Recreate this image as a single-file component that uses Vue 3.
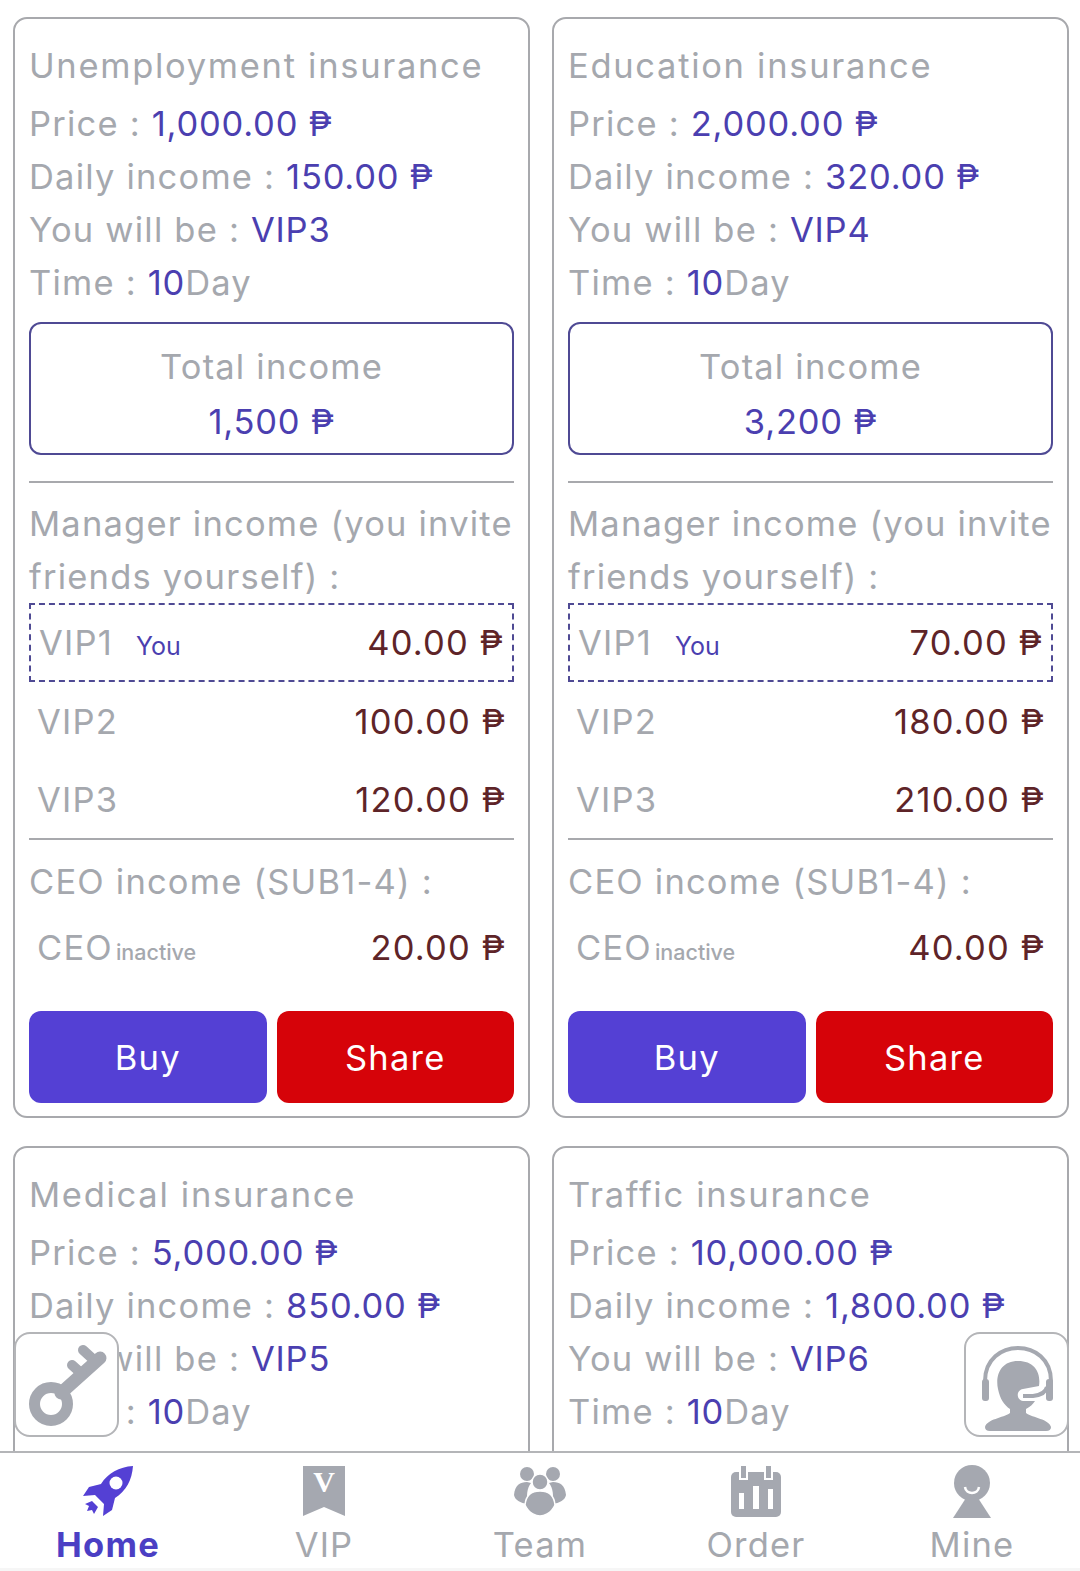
<script setup>
// only the first two plans are fully visible, the others sit behind the tab bar
const plans = [
  { name: "Unemployment insurance", price: "1,000.00", daily: "150.00", vip: "VIP3", total: "1,500", v1: "40.00", v2: "100.00", v3: "120.00", ceo: "20.00" },
  { name: "Education insurance", price: "2,000.00", daily: "320.00", vip: "VIP4", total: "3,200", v1: "70.00", v2: "180.00", v3: "210.00", ceo: "40.00" },
  { name: "Medical insurance", price: "5,000.00", daily: "850.00", vip: "VIP5" },
  { name: "Traffic insurance", price: "10,000.00", daily: "1,800.00", vip: "VIP6" },
];

const tabs = ["Home", "VIP", "Team", "Order", "Mine"];
</script>

<template>
  <div class="page">
    <main class="scroll">
      <div class="grid">
        <section v-for="plan in plans" :key="plan.name" class="card">
          <div class="line title">{{ plan.name }}</div>
          <div class="line">Price : <span class="blue">{{ plan.price }} ₱</span></div>
          <div class="line">Daily income : <span class="blue">{{ plan.daily }} ₱</span></div>
          <div class="line">You will be : <span class="blue">{{ plan.vip }}</span></div>
          <div class="line">Time : <span class="blue">10</span>Day</div>

          <template v-if="plan.total">
            <div class="total">
              <div>Total income</div>
              <div class="blue">{{ plan.total }} ₱</div>
            </div>

            <hr class="divider first" />
            <div class="line heading">Manager income (you invite<br />friends yourself) :</div>

            <div class="row mine-row">
              <span>VIP1<small class="you">You</small></span>
              <span class="money">{{ plan.v1 }} ₱</span>
            </div>
            <div class="row">
              <span>VIP2</span>
              <span class="money">{{ plan.v2 }} ₱</span>
            </div>
            <div class="row">
              <span>VIP3</span>
              <span class="money">{{ plan.v3 }} ₱</span>
            </div>

            <hr class="divider" />
            <div class="line heading ceo">CEO income (SUB1-4) :</div>
            <div class="row">
              <span>CEO<small class="inactive">inactive</small></span>
              <span class="money">{{ plan.ceo }} ₱</span>
            </div>

            <div class="actions">
              <button type="button" class="btn buy">Buy</button>
              <button type="button" class="btn share">Share</button>
            </div>
          </template>
        </section>
      </div>
    </main>

    <button type="button" class="float left" aria-label="Key">
      <svg viewBox="0 0 104 104" width="104" height="104">
        <circle cx="36" cy="71" r="16.5" fill="none" stroke="#a5a8b0" stroke-width="11" />
        <path d="M46 60 L85 25" stroke="#a5a8b0" stroke-width="13" stroke-linecap="round" fill="none" />
        <path d="M80 28 L68 17 M67 41 L57 32" stroke="#a5a8b0" stroke-width="10" stroke-linecap="round" fill="none" />
      </svg>
    </button>
    <button type="button" class="float right" aria-label="Support">
      <svg viewBox="0 0 104 104" width="104" height="104">
        <path d="M20 62 V48 C20 4 86 4 86 48 V62" fill="none" stroke="#a5a8b0" stroke-width="4" />
        <rect x="17" y="46" width="7" height="22" rx="3" fill="#a5a8b0" />
        <rect x="81" y="46" width="7" height="22" rx="3" fill="#a5a8b0" />
        <path d="M53 28 C36 28 30 42 33 56 C35 66 39 72 45 76 V80 C38 85 22 86 20 94 Q20 98 25 98 H81 Q86 98 86 94 C84 86 68 85 61 80 V76 C65 74 68 71 70 68 H58 C51 67 51 57 58 56 L74 53 C76 40 70 28 53 28 Z" fill="#a5a8b0" />
        <path d="M58 63 H68 C76 62 81 59 82 54" fill="none" stroke="#a5a8b0" stroke-width="4" />
      </svg>
    </button>

    <nav class="tabbar">
      <div v-for="(tab, i) in tabs" :key="tab" class="tab" :class="{ active: i === 0 }">
        <svg v-if="i === 0" viewBox="0 0 54 54" width="54" height="54">
          <path d="M52 2 C38 3 27 9 20 20 L8 23 L2 32 L14 31 L23 40 L22 52 L31 46 L34 34 C45 27 51 16 52 2 Z" fill="#5440d4" />
          <circle cx="35" cy="19" r="6.5" fill="#fff" />
          <path d="M11 37 L17 43 L13 50 L11 46 L6 47 L8 42 L4 40 Z" fill="#5440d4" />
        </svg>
        <svg v-else-if="i === 1" viewBox="0 0 54 54" width="54" height="54">
          <path d="M6 2 H48 V52 L27 43 L6 52 Z" fill="#a5a8b0" />
          <text x="27" y="28" text-anchor="middle" class="v-mark">V</text>
        </svg>
        <svg v-else-if="i === 2" viewBox="0 0 54 54" width="54" height="54">
          <circle cx="14" cy="10" r="7" fill="#a5a8b0" />
          <circle cx="40" cy="10" r="7" fill="#a5a8b0" />
          <path d="M1 31 C2 21 7 18 14 18 L18 19 C14 24 13 32 15 40 C7 39 2 36 1 31 Z" fill="#a5a8b0" />
          <path d="M53 31 C52 21 47 18 40 18 L36 19 C40 24 41 32 39 40 C47 39 52 36 53 31 Z" fill="#a5a8b0" />
          <circle cx="27" cy="18" r="8" fill="#a5a8b0" stroke="#fff" stroke-width="1.5" />
          <path d="M12 41 C13 30 20 27 27 27 C34 27 41 30 42 41 C38 50 30 52 27 52 C24 52 16 50 12 41 Z" fill="#a5a8b0" stroke="#fff" stroke-width="1.5" />
        </svg>
        <svg v-else-if="i === 3" viewBox="0 0 54 54" width="54" height="54">
          <rect x="2" y="8" width="50" height="45" rx="5" fill="#a5a8b0" />
          <rect x="11" y="1" width="7" height="14" fill="#a5a8b0" stroke="#fff" stroke-width="2" />
          <rect x="36" y="1" width="7" height="14" fill="#a5a8b0" stroke="#fff" stroke-width="2" />
          <path d="M10 29 h5 v16 h-5 z M24 22 h6 v23 h-6 z M39 25 h5 v20 h-5 z" fill="#fff" />
        </svg>
        <svg v-else viewBox="0 0 54 54" width="54" height="54">
          <circle cx="27" cy="19" r="18" fill="#a5a8b0" />
          <path d="M21 34 H33 L46 54 H8 Z" fill="#a5a8b0" />
          <path d="M20 23 C21 31 33 31 34 23" fill="none" stroke="#fff" stroke-width="2.5" />
        </svg>
        <span class="tab-label">{{ tab }}</span>
      </div>
    </nav>
  </div>
</template>

<style>
html,
body {
  margin: 0;
  background: #fff;
}
</style>

<style scoped>
.page {
  position: relative;
  display: flex;
  flex-direction: column;
  width: 1080px;
  height: 1571px;
  overflow: hidden;
  background: #fff;
  color: #a5a8ae;
  font-family: "Inter", "DejaVu Sans", sans-serif;
  font-size: 34.5px;
  letter-spacing: 1.2px;
}

.scroll {
  flex: 1;
  min-height: 0;
  overflow: hidden;
  padding: 17px 11px 0 13px;
}

.grid {
  display: grid;
  grid-template-columns: 517px 517px;
  gap: 28px 22px;
}

.card {
  box-sizing: border-box;
  height: 1101px;
  padding: 20px 14px 12px;
  border: 2px solid #a8a9ad;
  border-radius: 14px;
}

.line {
  line-height: 53px;
  white-space: nowrap;
}

.title {
  margin-bottom: 5px;
  letter-spacing: 1.7px;
}

.heading {
  margin-top: 14px;
}

.heading.ceo {
  margin-top: 15px;
}

.blue {
  color: #4b3fb0;
  letter-spacing: 0.8px;
}

.total {
  box-sizing: border-box;
  height: 133px;
  margin-top: 13px;
  padding: 15px 0;
  border: 2px solid #4f4a94;
  border-radius: 12px;
  line-height: 55px;
  text-align: center;
}

.divider {
  height: 2px;
  margin: 0;
  border: 0;
  background: #a8a9ad;
}

.divider.first {
  margin-top: 26px;
}

.row {
  box-sizing: border-box;
  display: flex;
  align-items: center;
  justify-content: space-between;
  height: 78px;
  padding: 0 8px;
}

.mine-row {
  height: 79px;
  border: 2px dashed #4f4a94;
}

.money {
  color: #5e2428;
}

.you {
  margin-left: 23px;
  color: #4b3fb0;
  font-size: 25px;
  letter-spacing: 0;
}

.inactive {
  margin-left: 3px;
  font-size: 21.5px;
  font-weight: 500;
  letter-spacing: 0;
}

.actions {
  display: flex;
  gap: 10px;
  margin-top: 25px;
}

.btn {
  flex: 1;
  height: 92px;
  border: 0;
  border-radius: 12px;
  color: #fff;
  font: inherit;
  letter-spacing: inherit;
}

.buy {
  background: #5440d4;
}

.share {
  background: #d60309;
}

.float {
  position: absolute;
  top: 1332px;
  box-sizing: border-box;
  width: 105px;
  height: 105px;
  padding: 0;
  border: 2px solid #b4b5b8;
  border-radius: 16px;
  background: #fff;
}

.float svg {
  display: block;
  margin: -1px;
}

.left {
  left: 14px;
}

.right {
  left: 964px;
}

.tabbar {
  box-sizing: border-box;
  display: grid;
  grid-template-columns: repeat(5, 216px);
  flex: none;
  height: 120px;
  padding-top: 11px;
  border-top: 2px solid #b4b5b8;
  border-bottom: 3px solid #f6f6f6;
  background: #fff;
}

.tab {
  display: flex;
  flex-direction: column;
  align-items: center;
}

.tab-label {
  margin-top: 5px;
  line-height: 44px;
}

.tab.active .tab-label {
  color: #4b3fc4;
  font-weight: 700;
}

.v-mark {
  fill: #fff;
  font-family: "Liberation Serif", serif;
  font-size: 30px;
  font-weight: 700;
  letter-spacing: 0;
}
</style>
